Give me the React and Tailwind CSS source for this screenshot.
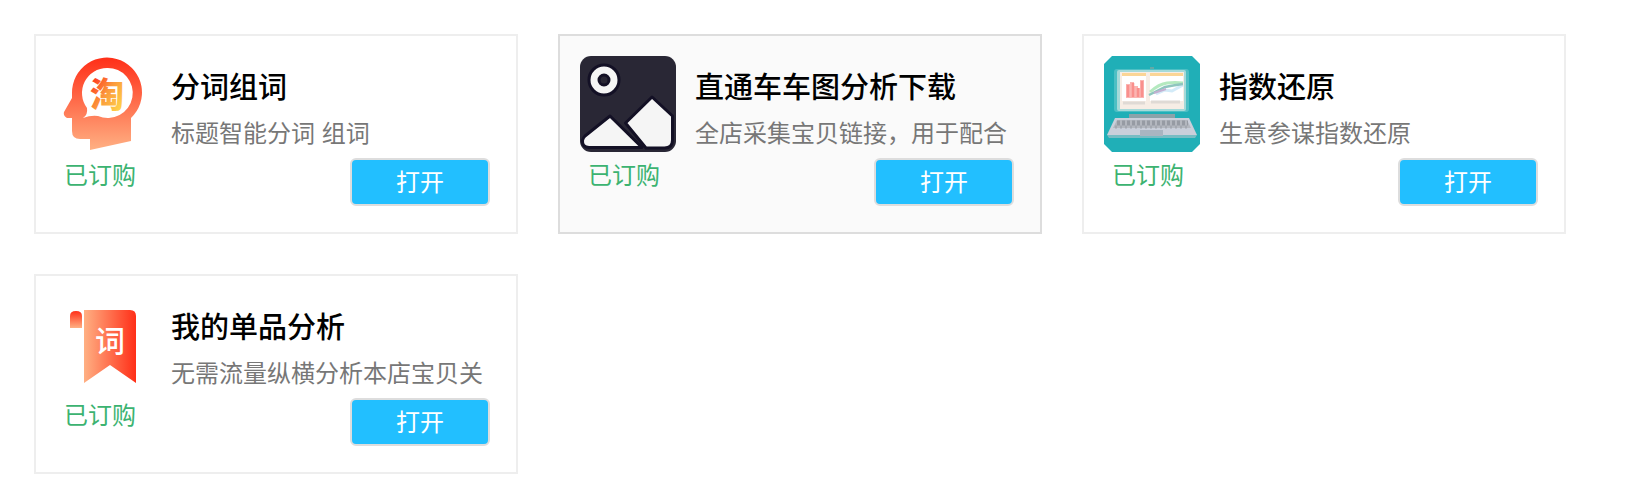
import React from "react";

const FONT = "font-['Liberation_Sans','Noto_Sans_CJK_SC',sans-serif]";

function HeadIcon() {
  return (
    <svg viewBox="0 0 96 96" className="w-24 h-24 shrink-0" aria-hidden="true">
      <defs>
        <linearGradient id="head" x1="0" y1="0" x2="0" y2="1">
          <stop offset="0" stopColor="#ff2f18" />
          <stop offset="1" stopColor="#ffb083" />
        </linearGradient>
        <linearGradient id="tao" x1="0" y1="0" x2="1" y2="1">
          <stop offset="0.1" stopColor="#ff2a1c" />
          <stop offset="0.5" stopColor="#fb9a3c" />
          <stop offset="0.9" stopColor="#ffd84a" />
        </linearGradient>
      </defs>
      <path
        d="M16 37a35 35 0 1 1 59 25v23L34 94V83H24q-8 0-8-8V62h-5q-4-2-3-6l8-14z"
        fill="url(#head)"
      />
      <path d="M51 12a25 25 0 1 1-9 48q-7-1-15 2 5-3 4-10A25 25 0 0 1 51 12z" fill="#fff" />
      <text x="51" y="51" textAnchor="middle" className="text-[34px] font-black font-['Noto_Sans_CJK_SC',sans-serif]" fill="url(#tao)">淘</text>
    </svg>
  );
}

function PictureIcon() {
  return (
    <svg viewBox="0 0 96 96" className="w-24 h-24 shrink-0" aria-hidden="true">
      <rect width="96" height="96" rx="11" fill="#292735" />
      <g fill="#f5f5f5" stroke="#131025" strokeWidth="3" strokeLinejoin="round">
        <circle cx="24" cy="24" r="15" />
        <circle cx="24" cy="24" r="5" fill="#292735" />
        <path d="M30 60L62 91.5H9Q2 91 2.500 84.500 3 82 5 80z" />
        <path d="M72 41L92.500 60V84q0 8-8 8H66L45.500 67z" />
      </g>
    </svg>
  );
}

function LaptopIcon() {
  return (
    <svg viewBox="0 0 96 96" className="w-24 h-24 shrink-0" aria-hidden="true">
      <path d="M8 0h80l8 8v80l-8 8H8l-8-8V8z" fill="#20afb7" />
      <rect x="46" y="11" width="4" height="3" fill="#62a9a6" />
      <rect x="10" y="13" width="75" height="43" rx="3" fill="#4dbfc4" />
      <rect x="13" y="14" width="69" height="41" rx="2" fill="#a5dad9" />
      <rect x="16" y="16" width="64" height="37" fill="#f6ede5" />
      <rect x="18" y="20" width="24" height="25" fill="#fff" />
      <rect x="46" y="20" width="33" height="25" fill="#fff" />
      <path d="M18 18.500h24M46 18.500h33" stroke="#fbd596" strokeWidth="3" />
      <path d="M22 42V28h4v-2h4v4h4v2h2v-8h4v18z" fill="#fbb5b2" />
      <path d="M24 41V29M29 41V27M34 41V32M38 41V25" stroke="#f98f8c" strokeWidth="2.500" />
      <path d="M46 36q9-8 17-9 8-1 16 0" stroke="#b4e9bf" strokeWidth="3" fill="none" />
      <path d="M52 38l9-4 7 1 11-6" stroke="#d3ebf8" strokeWidth="3" fill="none" />
      <path d="M45 39q8-4 16-8 10-2 18-3" stroke="#8fc5be" strokeWidth="2.500" fill="none" />
      <path d="M50 37l12-4" stroke="#c3afd0" strokeWidth="2" />
      <path d="M19 47h22M47 46h29" stroke="#dfdad5" strokeWidth="3" />
      <path d="M25 58h46v5H25z" fill="#8ba2a9" />
      <path d="M11 62h74l8 17H3z" fill="#c9cfda" />
      <path d="M3 79h90l-2 3H5z" fill="#77bcc3" />
      <path d="M13 64h70l4 8H9z" fill="#b3b7be" />
      <path d="M13 67h71" stroke="#969ba3" strokeWidth="5" strokeDasharray="3 2" />
      <path d="M11 71h75" stroke="#a3a8b0" strokeWidth="3" strokeDasharray="2 3" />
      <path d="M36 74h23v6H36z" fill="#a9b5c1" />
    </svg>
  );
}

function RibbonIcon() {
  return (
    <svg viewBox="0 0 96 96" className="w-24 h-24 shrink-0" aria-hidden="true">
      <defs>
        <linearGradient id="ribbon" x1="0" y1="0" x2="1" y2="0">
          <stop offset="0" stopColor="#ffb083" />
          <stop offset="1" stopColor="#ff2f18" />
        </linearGradient>
        <linearGradient id="roll" x1="0" y1="0" x2="0" y2="1">
          <stop offset="0" stopColor="#ff2f18" />
          <stop offset="1" stopColor="#ffb083" />
        </linearGradient>
      </defs>
      <path d="M14 32V20q0-5 6-5t6 5v12z" fill="url(#roll)" />
      <path d="M28 14h46q6 0 6 6v67L54 69 28 87z" fill="url(#ribbon)" />
      <text x="54" y="56" textAnchor="middle" className="text-[30px] font-medium font-['Noto_Sans_CJK_SC',sans-serif]" fill="#fff">词</text>
    </svg>
  );
}

const APPS = [
  { id: 1, title: "分词组词", desc: "标题智能分词 组词", icon: HeadIcon },
  { id: 2, title: "直通车车图分析下载", desc: "全店采集宝贝链接，用于配合", icon: PictureIcon, active: true },
  { id: 3, title: "指数还原", desc: "生意参谋指数还原", icon: LaptopIcon },
  { id: 4, title: "我的单品分析", desc: "无需流量纵横分析本店宝贝关", icon: RibbonIcon },
];

function AppCard({ app }) {
  const Icon = app.icon;
  return (
    <article
      className={`border-2 pt-5 pl-5 pr-[26px] pb-[26px] ${
        app.active ? "border-[#dddddd] bg-[#fafafa]" : "border-[#eeeeee] bg-white"
      }`}
    >
      <div className="flex gap-[19px]">
        <Icon />
        <div className="min-w-0 flex-1 pt-3">
          <h2 className="text-[29px] leading-10 font-medium text-black whitespace-nowrap overflow-hidden">{app.title}</h2>
          <p className="mt-2 text-2xl leading-9 text-[#777777] whitespace-nowrap overflow-hidden">{app.desc}</p>
        </div>
      </div>
      <div className="mt-1.5 pl-2 flex items-start justify-between">
        <span className="text-2xl leading-9 text-[#3cb371]">已订购</span>
        <button className="w-[140px] h-12 pt-0.5 rounded-md border-2 border-[#dddddd] bg-[#22bfff] text-2xl leading-8 text-white">
          打开
        </button>
      </div>
    </article>
  );
}

export default function App() {
  return (
    <main className={`bg-white pt-[34px] pb-7 pl-[34px] pr-[82px] ${FONT}`}>
      <div className="grid grid-cols-3 gap-10">
        {APPS.map((app) => (
          <AppCard key={app.id} app={app} />
        ))}
      </div>
    </main>
  );
}
